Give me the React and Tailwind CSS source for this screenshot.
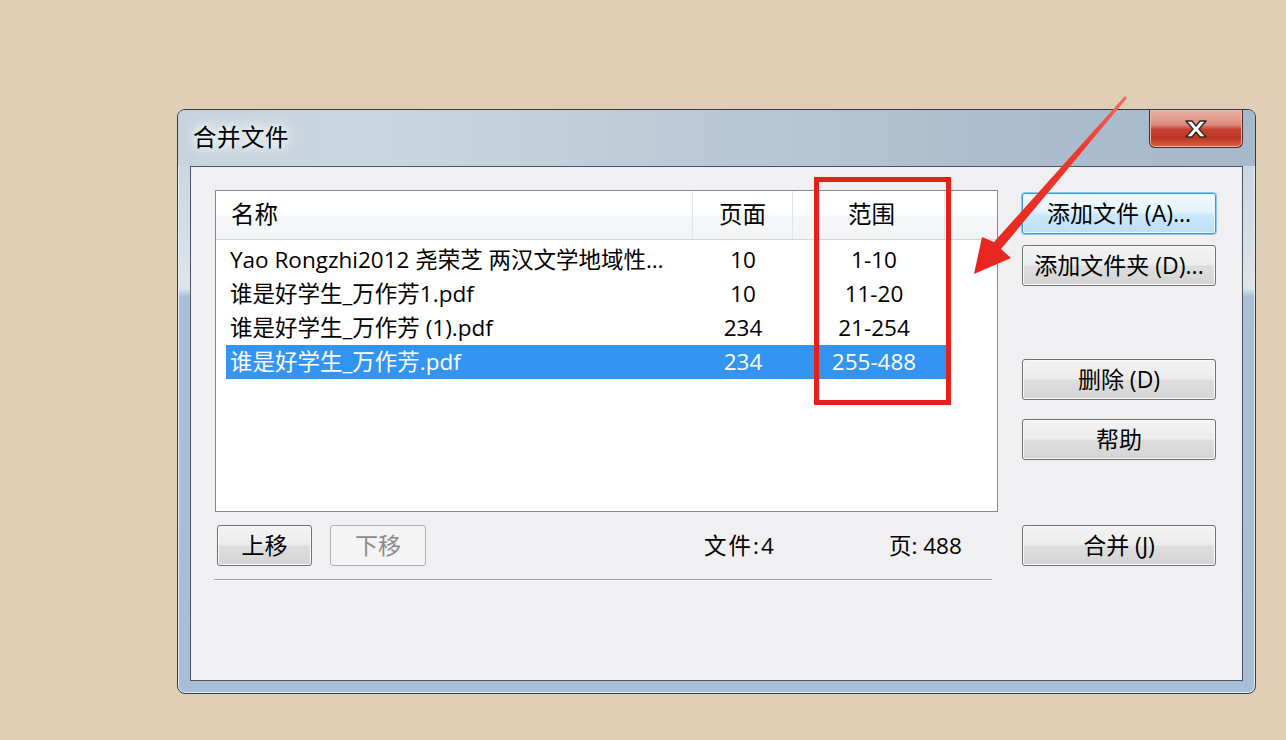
import React from "react";

const rows = [
  { name: "Yao Rongzhi2012 尧荣芝 两汉文学地域性…", pages: "10", range: "1-10" },
  { name: "谁是好学生_万作芳1.pdf", pages: "10", range: "11-20" },
  { name: "谁是好学生_万作芳 (1).pdf", pages: "234", range: "21-254" },
  { name: "谁是好学生_万作芳.pdf", pages: "234", range: "255-488", selected: true },
];

function Btn({ children, variant = "normal", className = "" }) {
  let look =
    "border-[#707070] bg-[linear-gradient(to_bottom,#f3f3f3_0%,#ececec_48%,#dedede_52%,#d4d4d4_100%)] shadow-[inset_0_0_0_1px_#fbfbfb] text-black";
  if (variant === "focused")
    look =
      "border-[#3c9ad8] bg-[linear-gradient(to_bottom,#f3fafe_0%,#e2f2fc_48%,#cce8f9_52%,#bcdff5_100%)] shadow-[inset_0_0_0_1px_#e9f6fd,0_0_0_1px_#8cc8ec] text-black";
  if (variant === "disabled")
    look = "border-[#adb2b5] bg-[#f4f4f4] text-[#8a8a8a]";
  return (
    <div
      className={`h-[41px] rounded-[3px] border flex items-center justify-center text-[23px] leading-none whitespace-nowrap ${look} ${className}`}
    >
      {children}
    </div>
  );
}

export default function App() {
  return (
    <div className="relative w-[1286px] h-[740px] overflow-hidden bg-[#e0cfb6] pt-[109px] pl-[177px] font-['Open_Sans','Noto_Sans_CJK_SC',sans-serif] text-black">
      {/* window */}
      <div className="w-[1079px] h-[585px] rounded-[8px] border border-[#363a3e] flex flex-col bg-[linear-gradient(to_bottom,#c3d1dc_0px,#d3dde6_120px,#dee6ed_178px,#a9c1d8_186px,#a6bed6_100%)] shadow-[inset_0_0_0_1px_#e6edf3]">
        {/* title bar */}
        <div className="h-[56px] flex items-start rounded-t-[7px] bg-[linear-gradient(to_right,#c6d3de_0%,#cbd7e0_18%,#bccbd7_45%,#acbece_75%,#a6b9ca_100%)]">
          <div className="pl-[15px] pt-[11px] text-[23.5px] leading-[32px] tracking-[0.5px] [text-shadow:0_0_8px_#ffffff,0_0_14px_#ffffff,0_0_22px_#eef3f7]">
            合并文件
          </div>
          <div className="ml-auto mr-[12px] w-[94px] h-[38px] rounded-b-[6px] border border-t-0 border-[#4d2a24] bg-[linear-gradient(to_bottom,#eab0a6_0%,#dc8a7c_40%,#c64332_52%,#bd3526_75%,#d8643f_100%)] shadow-[inset_0_0_0_1px_#f0b7aa] flex items-center justify-center">
            <svg width="26" height="20" viewBox="0 0 26 20">
              <path
                d="M3 2 H9 L13 7 L17 2 H23 L16 10 L23 18 H17 L13 13 L9 18 H3 L10 10 Z"
                fill="#ffffff"
                stroke="#3b2420"
                strokeWidth="1.4"
                strokeLinejoin="round"
              />
            </svg>
          </div>
        </div>

        {/* client area */}
        <div className="mx-[12px] mb-[12px] flex-1 border border-[#4b545e] bg-[#f0eff1] flex pt-[23px] pl-[24px]">
          {/* left column */}
          <div className="w-[783px] flex flex-col">
            <div className="h-[322px] border border-[#828790] bg-white flex flex-col">
              {/* header */}
              <div className="h-[49px] flex border-b border-[#d5d5d5] bg-[linear-gradient(to_bottom,#ffffff_0%,#ffffff_50%,#f6f7f9_52%,#f3f4f6_100%)] text-[23.5px]">
                <div className="w-[477px] pl-[15px] flex items-center border-r border-[#e3e4e6]">名称</div>
                <div className="w-[100px] flex items-center justify-center border-r border-[#e3e4e6]">页面</div>
                <div className="w-[152px] pl-[6px] flex items-center justify-center border-r border-[#e3e4e6]">范围</div>
              </div>
              {/* rows */}
              <div className="pt-[3px] pl-[10px] flex flex-col text-[22.5px]">
                {rows.map((r, i) => (
                  <div
                    key={i}
                    className={`h-[34px] w-[721px] flex items-center ${r.selected ? "bg-[#3494f2] text-white" : ""}`}
                  >
                    <div className="w-[467px] pl-[4px] whitespace-nowrap overflow-hidden">{r.name}</div>
                    <div className="w-[100px] text-center">{r.pages}</div>
                    <div className="w-[154px] pl-[8px] text-center">{r.range}</div>
                  </div>
                ))}
              </div>
            </div>

            {/* bottom row */}
            <div className="mt-[13px] flex items-center">
              <Btn className="ml-[2px] w-[95px]">上移</Btn>
              <Btn variant="disabled" className="ml-[18px] w-[96px]">下移</Btn>
              <div className="ml-[278px] w-[185px] text-[22.5px] tracking-[2px] whitespace-nowrap">文件:4</div>
              <div className="text-[22.5px] whitespace-nowrap">页: 488</div>
            </div>
            <div className="mt-[13px] -ml-px w-[778px] h-[2px] border-t border-[#a0a0a0] border-b border-b-white"></div>
          </div>

          {/* right column */}
          <div className="ml-[24px] w-[194px] flex flex-col">
            <Btn variant="focused" className="mt-[3px]">添加文件 (A)...</Btn>
            <Btn className="mt-[11px]">添加文件夹 (D)...</Btn>
            <Btn className="mt-[73px]">删除 (D)</Btn>
            <Btn className="mt-[19px]">帮助</Btn>
            <Btn className="mt-[65px]">合并 (J)</Btn>
          </div>
        </div>
      </div>

      {/* red annotation box */}
      <div className="absolute left-[814px] top-[177px] w-[137px] h-[228px] border-[5px] border-[#e5201c]"></div>

      {/* red annotation arrow */}
      <svg className="absolute left-0 top-0" width="1286" height="740" viewBox="0 0 1286 740">
        <defs>
          <linearGradient id="ar" x1="1126" y1="97" x2="975" y2="273" gradientUnits="userSpaceOnUse">
            <stop offset="0" stopColor="#f06a5a" />
            <stop offset="0.3" stopColor="#ea3a30" />
            <stop offset="1" stopColor="#e8231e" />
          </linearGradient>
        </defs>
        <polygon
          points="974,274 982,237 994,242 1125,96 1127,98 1001,249 1011,258"
          fill="url(#ar)"
        />
      </svg>
    </div>
  );
}
